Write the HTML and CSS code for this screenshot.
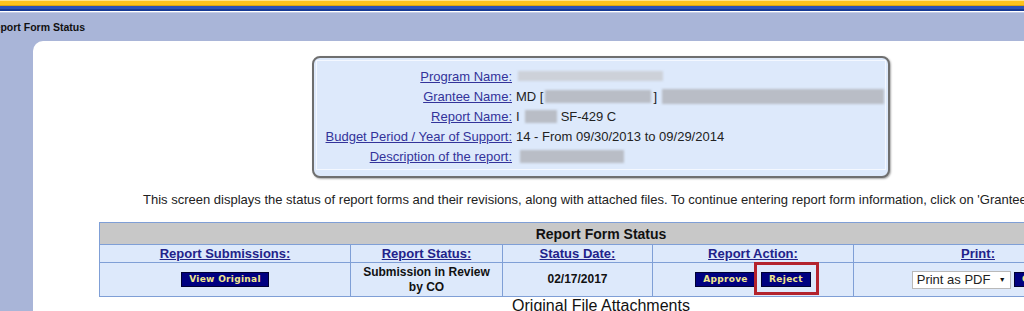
FILE: index.html
```html
<!DOCTYPE html>
<html lang="en">

<head>
    <meta charset="UTF-8">
    <title>Report Form Status</title>
    <link rel="stylesheet" href="styles.css">
</head>

<body>
    <div class="stripe"></div>
    <div class="titlebar">Report Form Status</div>

    <div class="page">
        <div class="gutter"></div>
        <div class="panel">
            <div class="infobox">
                <div class="info">
                    <a class="lbl" href="#">Program Name:</a>
                    <span class="val"><span class="blur light w-prog"></span></span>

                    <a class="lbl" href="#">Grantee Name:</a>
                    <span class="val">MD [<span class="blur w-gid"></span>] <span class="blur w-gname"></span></span>

                    <a class="lbl" href="#">Report Name:</a>
                    <span class="val">I<span class="blur w-rep"></span>SF-429 C</span>

                    <a class="lbl" href="#">Budget Period / Year of Support:</a>
                    <span class="val">14 - From 09/30/2013 to 09/29/2014</span>

                    <a class="lbl" href="#">Description of the report:</a>
                    <span class="val"><span class="blur w-desc"></span></span>
                </div>
            </div>

            <p class="intro">This screen displays the status of report forms and their revisions, along with attached files. To continue entering report form information, click on 'Grantee Reports' in the left menu.</p>

            <table class="status">
                <colgroup>
                    <col style="width: 251px">
                    <col style="width: 152px">
                    <col style="width: 150px">
                    <col style="width: 201px">
                    <col>
                </colgroup>
                <tr>
                    <th colspan="5" class="caption">Report Form Status</th>
                </tr>
                <tr class="heads">
                    <th><a href="#">Report Submissions:</a></th>
                    <th><a href="#">Report Status:</a></th>
                    <th><a href="#">Status Date:</a></th>
                    <th><a href="#">Report Action:</a></th>
                    <th><a href="#">Print:</a></th>
                </tr>
                <tr class="data">
                    <td><button class="btn">View Original</button></td>
                    <td class="bold">Submission in Review<br>by CO</td>
                    <td class="bold">02/17/2017</td>
                    <td>
                        <button class="btn">Approve</button>
                        <span class="marked"><button class="btn">Reject</button></span>
                    </td>
                    <td>
                        <span class="select">Print as PDF<span class="arrow">&#9660;</span></span>
                        <button class="btn">Go</button>
                    </td>
                </tr>
            </table>

            <div class="attach">Original File Attachments</div>
        </div>
    </div>
</body>

</html>
```

FILE: styles.css
```css
body,
html {
    margin: 0;
}

body {
    background-color: #a9b5d8;
    font-family: 'Liberation Sans', Arial, sans-serif;
    color: #222;
    overflow: hidden;
}

.stripe {
    height: 13px;
    background: linear-gradient(to bottom,
            #ffe48a 0, #ffe48a 1px,
            #fcc21c 1px, #fcc21c 5px,
            #dca410 5px, #dca410 6px,
            #2a52b8 6px, #2a52b8 9px,
            #163a94 9px, #163a94 11px,
            #ffffff 11px, #ffffff 12px,
            #c4cce6 12px, #c4cce6 13px);
}

.titlebar {
    height: 28px;
    line-height: 28px;
    margin-left: -13px;
    font-size: 10.5px;
    font-weight: bold;
    color: #111;
}

.page {
    display: flex;
}

.gutter {
    width: 33px;
    flex: none;
}

.panel {
    width: 1136px;
    flex: none;
    height: 280px;
    background-color: #fff;
    border-top-left-radius: 10px;
    padding-top: 15px;
}

/* grantee info box */
.infobox {
    width: 574px;
    height: 118px;
    margin: 0 auto;
    box-sizing: content-box;
    border: 2px solid #6f6f6f;
    border-radius: 8px;
    background-color: #dde9fb;
    box-shadow: 1px 1px 2px rgba(0, 0, 0, 0.35);
    padding: 2px;
    box-sizing: border-box;
    width: 578px;
    height: 122px;
}

.info {
    height: 110px;
    box-sizing: border-box;
    border: 1px solid #f4f8ff;
    padding: 5px 0 0 0;
    display: grid;
    grid-template-columns: 195px 1fr;
    grid-auto-rows: 20px;
    column-gap: 4px;
    align-items: center;
    font-size: 13px;
}

.lbl {
    text-align: right;
    color: #33339a;
}

.val {
    color: #222;
    display: flex;
    align-items: center;
    white-space: nowrap;
}

.blur {
    display: inline-block;
    height: 13px;
    background-color: #b9bdc6;
    filter: blur(1.2px);
}

.blur.light {
    background-color: #cdd1d9;
    height: 10px;
}

.w-prog {
    width: 145px;
    margin-left: 2px;
}

.w-gid {
    width: 106px;
    margin: 0 2px;
}

.w-gname {
    width: 222px;
    margin-left: 5px;
    height: 15px;
}

.w-rep {
    width: 32px;
    margin: 0 4px 0 5px;
}

.w-desc {
    width: 104px;
    margin-left: 4px;
}

.intro {
    margin: 14px 0 0 110px;
    font-size: 13px;
    line-height: 16px;
    white-space: nowrap;
    color: #222;
}

/* status table */
.status {
    margin: 14px 0 0 66px;
    width: 1004px;
    table-layout: fixed;
    border-collapse: collapse;
    background-color: #dde9fb;
}

.status th,
.status td {
    border: 1px solid #7f9fd6;
    padding: 0;
    text-align: center;
}

.caption {
    height: 21px;
    background-color: #c8c8c8;
    font-size: 14px;
    color: #111;
}

.heads th {
    height: 17px;
    font-size: 13px;
}

.heads a {
    color: #22228a;
}

.data td {
    height: 33px;
    font-size: 12px;
    color: #111;
}

.bold {
    font-weight: bold;
    line-height: 15px;
}

.btn {
    font-family: 'DejaVu Sans', Verdana, sans-serif;
    font-size: 9px;
    font-weight: bold;
    letter-spacing: 0.3px;
    color: #f2e68c;
    background-color: #000080;
    border: 1px solid #000033;
    padding: 0 7px;
    height: 15px;
    line-height: 13px;
    vertical-align: middle;
    cursor: pointer;
}

.marked {
    position: relative;
    margin-left: 2px;
}

.marked::after {
    content: '';
    position: absolute;
    left: -7px;
    right: -8px;
    top: -10px;
    bottom: -9px;
    border: 3px solid #b3232d;
}

.select {
    display: inline-flex;
    align-items: center;
    justify-content: space-between;
    width: 99px;
    height: 18px;
    box-sizing: border-box;
    padding: 0 4px;
    background-color: #fff;
    border: 1px solid #b9b9b9;
    font-size: 13px;
    color: #222;
    vertical-align: middle;
    text-align: left;
}

.arrow {
    font-size: 7px;
    color: #111;
}

.attach {
    text-align: center;
    margin-left: 0;
    font-size: 16px;
    line-height: 18px;
    color: #111;
}
```
